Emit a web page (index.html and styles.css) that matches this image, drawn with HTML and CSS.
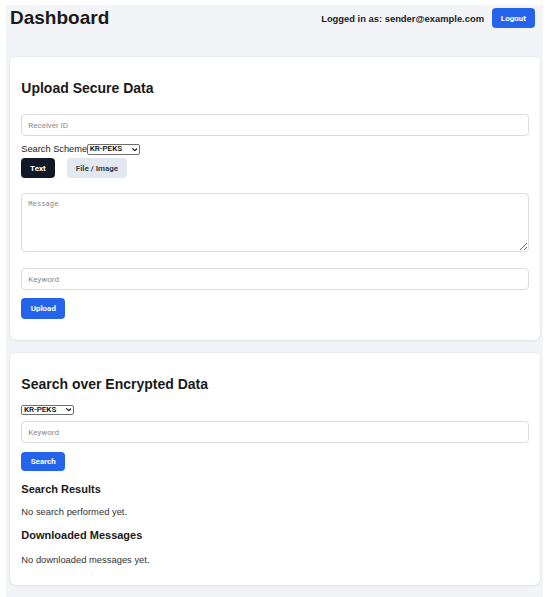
FILE: index.html
```html
<!DOCTYPE html>
<html lang="en">
<head>
<meta charset="utf-8">
<title>Dashboard</title>
<link rel="stylesheet" href="styles.css">
</head>
<body>
<div class="app">
  <header class="topbar">
    <h1 class="title">Dashboard</h1>
    <div class="user">
      <span class="user-label">Logged in as: sender@example.com</span>
      <button class="btn btn-primary" type="button">Logout</button>
    </div>
  </header>

  <section class="card card-upload">
    <h2 class="card-title">Upload Secure Data</h2>
    <input class="field field-receiver" type="text" placeholder="Receiver ID">
    <div class="scheme-row">
      <label class="scheme-label" for="scheme">Search Scheme</label><span class="select-wrap"><select id="scheme" class="scheme-select"><option>KR-PEKS</option></select><svg class="chevron" viewBox="0 0 10 6" aria-hidden="true"><path d="M1.2 1.2 L5 4.8 L8.8 1.2"/></svg></span>
    </div>
    <div class="tabs">
      <button class="btn btn-dark" type="button">Text</button>
      <button class="btn btn-light" type="button">File / Image</button>
    </div>
    <textarea class="message" placeholder="Message"></textarea>
    <input class="field field-keyword" type="text" placeholder="Keyword">
    <button class="btn btn-primary btn-upload" type="button">Upload</button>
  </section>

  <section class="card card-search">
    <h2 class="card-title">Search over Encrypted Data</h2>
    <span class="select-wrap select-wrap-search"><select class="scheme-select"><option>KR-PEKS</option></select><svg class="chevron" viewBox="0 0 10 6" aria-hidden="true"><path d="M1.2 1.2 L5 4.8 L8.8 1.2"/></svg></span>
    <input class="field field-search" type="text" placeholder="Keyword">
    <button class="btn btn-primary btn-search" type="button">Search</button>
    <h3 class="sub-title sub-results">Search Results</h3>
    <p class="note">No search performed yet.</p>
    <h3 class="sub-title sub-downloads">Downloaded Messages</h3>
    <p class="note note-last">No downloaded messages yet.</p>
  </section>
</div>
</body>
</html>
```

FILE: styles.css
```css
html, body {
  margin: 0;
  padding: 0;
  background: #ffffff;
}

body {
  font-family: "Liberation Sans", Arial, sans-serif;
  color: #1f1f1f;
}

.app {
  margin: 5px 6.7px 0 6px;
  padding: 0 3.3px 12px 4px;
  background: #f3f4f8;
  min-height: 580px;
}

/* top bar */
.topbar {
  display: flex;
  align-items: center;
  justify-content: space-between;
  padding: 2.4px 5.3px 0 0;
  margin-bottom: 27.6px;
}

.title {
  margin: 0;
  font-size: 19px;
  line-height: 22px;
  font-weight: 700;
  color: #1a1a1a;
}

.user {
  display: flex;
  align-items: center;
  gap: 8px;
}

.user-label {
  font-size: 9.4px;
  font-weight: 700;
  color: #222;
}

/* buttons */
.btn {
  height: 20px;
  padding: 0 8.8px;
  border: none;
  border-radius: 4px;
  font-family: Roboto, "Liberation Sans", sans-serif;
  font-size: 8px;
  font-weight: 700;
  cursor: pointer;
  flex: none;
}

.btn-primary {
  background: #2563eb;
  color: #ffffff;
}

.btn-dark {
  background: #111827;
  color: #ffffff;
}

.btn-light {
  background: #e2e8f0;
  color: #374151;
}

/* cards */
.card {
  display: flex;
  flex-direction: column;
  align-items: flex-start;
  background: #ffffff;
  border-radius: 6px;
  box-shadow: 0 0 0 1px rgba(0, 0, 0, 0.025), 0 1px 3px rgba(0, 0, 0, 0.06);
  padding: 11px 11px 21px 11.3px;
}

.card-search {
  margin-top: 12.7px;
  padding-bottom: 20.5px;
}

.card-title {
  margin: 12.4px 0 0;
  font-size: 14px;
  line-height: 16px;
  font-weight: 700;
  color: #1a1a1a;
}

/* form fields */
.field {
  align-self: stretch;
  box-sizing: border-box;
  height: 21.7px;
  padding: 0 6px;
  border: 1px solid #dcdcdc;
  border-radius: 4px;
  background: #fff;
  font-family: Roboto, "Liberation Sans", sans-serif;
  font-size: 8px;
  color: #222;
  outline: none;
}

.field::placeholder,
.message::placeholder {
  color: #888888;
}

.field-receiver {
  margin-top: 17.9px;
}

.scheme-row {
  display: flex;
  align-items: center;
  height: 15px;
  margin-top: 6px;
}

.scheme-label {
  font-size: 9.25px;
  color: #222;
}

/* native select with a drawn chevron on top */
.select-wrap {
  position: relative;
  display: inline-flex;
  flex: none;
}

.scheme-select {
  appearance: none;
  -webkit-appearance: none;
  box-sizing: border-box;
  width: 52.5px;
  height: 10.6px;
  margin: 0;
  padding: 0 8px 0 1.6px;
  border: 1px solid #6f6f6f;
  border-radius: 2px;
  background: #fff;
  font-family: Roboto, "Liberation Sans", sans-serif;
  font-size: 8px;
  font-weight: 500;
  line-height: 8.6px;
  color: #000;
}

.chevron {
  position: absolute;
  right: 2.4px;
  top: 3.4px;
  width: 5.6px;
  height: 3.4px;
  pointer-events: none;
}

.chevron path {
  fill: none;
  stroke: #111;
  stroke-width: 2;
  stroke-linecap: round;
  stroke-linejoin: round;
}

.tabs {
  display: flex;
  gap: 12.4px;
  margin-top: 1.3px;
}

.message {
  align-self: stretch;
  box-sizing: border-box;
  height: 59px;
  margin: 14.4px 0 0;
  padding: 6px;
  border: 1px solid #dcdcdc;
  border-radius: 4px;
  font-family: "Liberation Mono", monospace;
  font-size: 7.2px;
  outline: none;
}

.field-keyword {
  margin-top: 16.6px;
}

.btn-upload {
  margin-top: 8.3px;
  height: 20.7px;
  padding: 0 9.4px;
}

/* search card */
.select-wrap-search {
  margin-top: 12.9px;
}

.field-search {
  margin-top: 6px;
  height: 21.4px;
}

.btn-search {
  margin-top: 9px;
  height: 19.6px;
  padding: 0 9.4px;
}

.sub-title {
  margin: 11.6px 0 0;
  font-size: 11px;
  line-height: 13px;
  font-weight: 700;
  color: #1a1a1a;
}

.sub-downloads {
  margin-top: 11.5px;
}

.note {
  margin: 10.2px 0 0;
  font-size: 9.4px;
  line-height: 11px;
  color: #333;
}

.note-last {
  margin-top: 11.8px;
}
```
